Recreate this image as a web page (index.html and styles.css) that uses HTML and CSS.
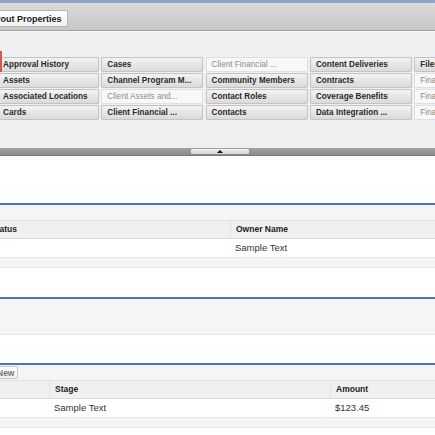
FILE: index.html
```html
<!DOCTYPE html>
<html lang="en">
<head>
    <meta charset="UTF-8">
    <meta name="viewport" content="width=device-width, initial-scale=1.0">
    <title>Page Layout Editor</title>
    <link rel="stylesheet" href="styles.css">
</head>
<body>
    <div class="page">
        <div class="topbar"></div>

        <!-- toolbar -->
        <div class="toolbar">
            <button class="tb-btn">Layout Properties</button>
        </div>

        <!-- palette of related lists -->
        <div class="palette">
            <span class="marker"></span>
            <div class="palette-grid">
                <div class="item">Approval History</div>
                <div class="item">Cases</div>
                <div class="item used">Client Financial ...</div>
                <div class="item">Content Deliveries</div>
                <div class="item">Files</div>

                <div class="item">Assets</div>
                <div class="item">Channel Program M...</div>
                <div class="item">Community Members</div>
                <div class="item">Contracts</div>
                <div class="item used">Financial Accounts</div>

                <div class="item">Associated Locations</div>
                <div class="item used">Client Assets and...</div>
                <div class="item">Contact Roles</div>
                <div class="item">Coverage Benefits</div>
                <div class="item used">Financial Goals</div>

                <div class="item">Cards</div>
                <div class="item">Client Financial ...</div>
                <div class="item">Contacts</div>
                <div class="item">Data Integration ...</div>
                <div class="item used">Financial Holdings</div>
            </div>
        </div>

        <div class="splitter">
            <div class="handle"><span class="arrow"></span></div>
        </div>

        <div class="blank b1"></div>

        <!-- related list 1 -->
        <div class="rlist">
            <div class="rl-head"></div>
            <div class="rl-row rl-th cols-a">
                <div class="cell">Status</div>
                <div class="cell">Owner Name</div>
            </div>
            <div class="rl-row rl-td cols-a">
                <div class="cell"></div>
                <div class="cell">Sample Text</div>
            </div>
            <div class="rl-foot"></div>
        </div>

        <div class="blank b2"></div>

        <!-- related list 2 (empty) -->
        <div class="rlist">
            <div class="rl-head tall"></div>
        </div>

        <div class="blank b3"></div>

        <!-- related list 3 -->
        <div class="rlist">
            <div class="rl-head">
                <button class="new-btn">New</button>
            </div>
            <div class="rl-row rl-th cols-b">
                <div class="cell"></div>
                <div class="cell">Stage</div>
                <div class="cell">Amount</div>
            </div>
            <div class="rl-row rl-td cols-b">
                <div class="cell"></div>
                <div class="cell">Sample Text</div>
                <div class="cell">$123.45</div>
            </div>
            <div class="rl-foot"></div>
        </div>
    </div>
</body>
</html>
```

FILE: styles.css
```css
* {
    margin: 0;
    padding: 0;
    box-sizing: border-box;
    font-family: "Liberation Sans", Arial, sans-serif;
}

body {
    background: #fff;
    overflow: hidden;
}

.page {
    width: 500px;
    margin-left: -30px;
}

.topbar {
    height: 3px;
    background: #8ea5cc;
}

/* toolbar */
.toolbar {
    display: flex;
    align-items: flex-start;
    height: 28px;
    padding: 7px 0 0 9px;
    background: linear-gradient(#dcdcdc, #c6c6c6);
    border-bottom: 1px solid #a3a3a3;
}

.tb-btn {
    height: 17px;
    padding: 0 5px;
    font-size: 9px;
    font-weight: bold;
    color: #222;
    background: linear-gradient(#fff, #f1f1f1);
    border: 1px solid #b5b5b5;
    border-radius: 2px;
}

/* palette */
.palette {
    position: relative;
    height: 117px;
    padding: 25px 0 0 27px;
    background: #eff0f2;
    border-top: 1px solid #f7f7f7;
}

.marker {
    position: absolute;
    left: 30px;
    top: 19px;
    width: 2px;
    height: 21px;
    background: #d9534f;
}

.palette-grid {
    display: grid;
    grid-template-columns: repeat(5, 102px);
    grid-auto-rows: 15px;
    column-gap: 2.3px;
    row-gap: 1px;
}

.item {
    padding-left: 5px;
    font-size: 8.2px;
    font-weight: bold;
    line-height: 13px;
    color: #2a2a2a;
    white-space: nowrap;
    overflow: hidden;
    background: linear-gradient(#f3f3f3, #dadada);
    border: 1px solid #c3c3c3;
    border-radius: 1px;
}

.item.used {
    font-weight: normal;
    color: #8c8c8c;
    background: #f8f8f8;
    border-color: #e0e0e0;
}

/* splitter */
.splitter {
    height: 8px;
    display: flex;
    justify-content: center;
    padding-top: 1px;
    background: linear-gradient(#a2a2a2, #8b8b8b);
    border-bottom: 1px solid #7c7c7c;
}

.handle {
    width: 58px;
    height: 5px;
    display: flex;
    justify-content: center;
    align-items: center;
    background: linear-gradient(#f2f2f2, #d2d2d2);
    border-radius: 1px;
}

.arrow {
    width: 0;
    height: 0;
    border-left: 3px solid transparent;
    border-right: 3px solid transparent;
    border-bottom: 3px solid #111;
}

/* blank white gaps */
.blank {
    background: #fff;
}

.b1 { height: 47px; }
.b2 { height: 29px; }
.b3 { height: 28px; }

/* related lists */
.rlist {
    border-top: 2px solid #4b74b8;
    background: #f5f5f5;
}

.rl-head {
    display: flex;
    align-items: flex-start;
    height: 15px;
    padding-left: 22px;
}

.rl-head.tall {
    height: 36px;
    border-bottom: 1px solid #e3e3e3;
}

.new-btn {
    margin-top: 1px;
    height: 13px;
    padding: 0 3px 0 4px;
    font-size: 8.5px;
    font-weight: bold;
    color: #777;
    background: linear-gradient(#fff, #f0f0f0);
    border: 1px solid #c9c9c9;
    border-radius: 2px;
}

.rl-row {
    display: grid;
    font-size: 9.5px;
}

.cols-a {
    grid-template-columns: 260px 1fr;
}

.cols-b {
    grid-template-columns: 79px 281px 1fr;
}

.rl-th {
    height: 19px;
    background: #f0f0f0;
    border-top: 1px solid #e2e2e2;
    border-bottom: 1px solid #dcdcdc;
}

.rl-th .cell {
    font-size: 8.5px;
    font-weight: bold;
    color: #222;
    line-height: 17px;
    padding-left: 5px;
}

.rl-th .cell + .cell {
    border-left: 1px solid #e2e2e2;
}

.cols-a.rl-th .cell:first-child {
    padding-left: 21px;
}

.rl-td {
    height: 19px;
    background: #fff;
    border-bottom: 1px solid #e4e4e4;
}

.rl-td .cell {
    color: #333;
    line-height: 18px;
    padding-left: 5px;
}

.rl-foot {
    height: 10px;
    background: #f5f5f5;
    border-bottom: 1px solid #e8e8e8;
}
```
